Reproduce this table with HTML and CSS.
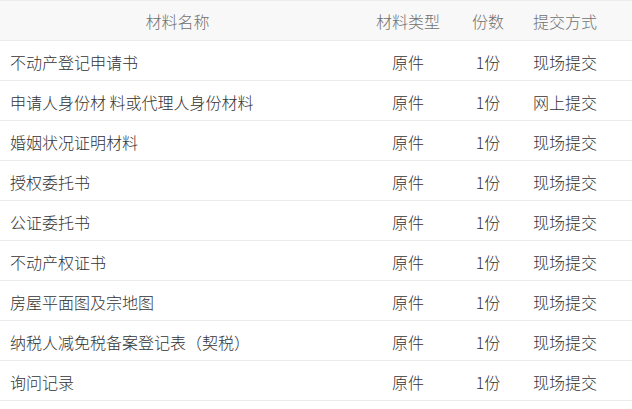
FILE: index.html
```html
<!DOCTYPE html>
<html lang="zh">
<head>
<meta charset="utf-8">
<link rel="stylesheet" href="styles.css">
</head>
<body>
<table class="mat-table">
  <colgroup>
    <col class="c-name"><col class="c-type"><col class="c-num"><col class="c-way">
  </colgroup>
  <thead>
    <tr><th>材料名称</th><th>材料类型</th><th>份数</th><th>提交方式</th></tr>
  </thead>
  <tbody>
    <tr><td class="name">不动产登记申请书</td><td>原件</td><td>1份</td><td>现场提交</td></tr>
    <tr><td class="name">申请人身份材 料或代理人身份材料</td><td>原件</td><td>1份</td><td>网上提交</td></tr>
    <tr><td class="name">婚姻状况证明材料</td><td>原件</td><td>1份</td><td>现场提交</td></tr>
    <tr><td class="name">授权委托书</td><td>原件</td><td>1份</td><td>现场提交</td></tr>
    <tr><td class="name">公证委托书</td><td>原件</td><td>1份</td><td>现场提交</td></tr>
    <tr><td class="name">不动产权证书</td><td>原件</td><td>1份</td><td>现场提交</td></tr>
    <tr><td class="name">房屋平面图及宗地图</td><td>原件</td><td>1份</td><td>现场提交</td></tr>
    <tr><td class="name">纳税人减免税备案登记表（契税）</td><td>原件</td><td>1份</td><td>现场提交</td></tr>
    <tr><td class="name">询问记录</td><td>原件</td><td>1份</td><td>现场提交</td></tr>
  </tbody>
</table>
</body>
</html>
```
FILE: styles.css
```css
html, body { margin: 0; padding: 0; background: #fff; }
body {
  font-family: "Microsoft YaHei", "Noto Sans CJK SC", sans-serif;
  font-size: 16px;
  font-weight: 300;
  text-spacing-trim: space-all;
}
.mat-table {
  width: 632px;
  border-collapse: collapse;
  table-layout: fixed;
  border-top: 1px solid #ececec;
}
.c-name { width: 355px; }
.c-type { width: 106px; }
.c-num { width: 54px; }
.c-way { width: 117px; }
.mat-table th, .mat-table td {
  height: 39px;
  padding: 0;
  text-align: center;
  border-bottom: 1px solid #ececec;
  white-space: nowrap;
  line-height: 20px;
}
.mat-table th:last-child, .mat-table td:last-child { padding-right: 17px; }
.mat-table th {
  background: #f8f8f8;
  color: #707070;
  font-weight: 300;
}
.mat-table td { color: #333; padding-top: 2px; height: 37px; }
.mat-table td.name {
  text-align: left;
  padding-left: 10px;
}
```
